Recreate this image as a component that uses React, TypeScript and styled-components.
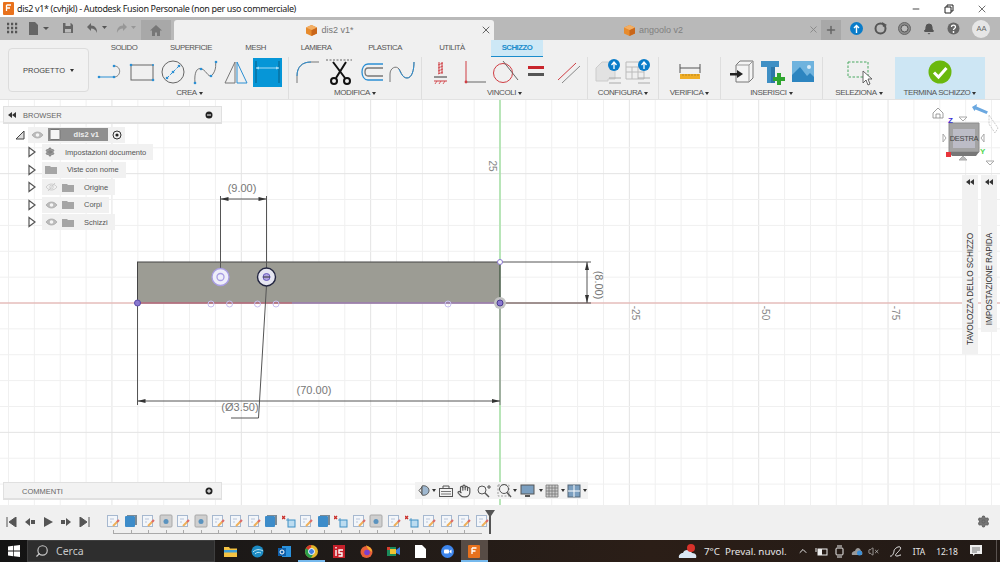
import React from 'react';
import styled, { createGlobalStyle } from 'styled-components';
import { Hand, Search, Settings, X, Plus, ChevronUp, VolumeX, Bell, Minus } from 'lucide-react';

const GlobalStyle = createGlobalStyle`
  html, body {
    margin: 0;
    padding: 0;
    overflow: hidden;
    background: #fff;
  }
  * {
    box-sizing: border-box;
  }
`;

const Page = styled.div`
  width: 1000px;
  height: 562px;
  display: flex;
  flex-direction: column;
  font-family: 'Liberation Sans', Arial, sans-serif;
  color: #555;
`;

/* ---- title bar ---- */
const TitleBar = styled.header`
  height: 17px;
  background: #fff;
  display: flex;
  align-items: center;
  padding: 0 2px 0 3px;
  font-family: 'Noto Sans', sans-serif;
  font-size: 9px;
  letter-spacing: -0.34px;
  color: #222;
`;

const TitleText = styled.span`
  margin-left: 3px;
  flex: 1;
  white-space: nowrap;
`;

const WindowBtn = styled.div`
  width: 33px;
  display: flex;
  justify-content: center;
  align-items: center;
  color: #222;
`;

/* ---- tab bar ---- */
const TabBar = styled.nav`
  height: 23px;
  background: #b9b9b9;
  display: flex;
  align-items: stretch;
  padding-top: 3px;
`;

const QuickTools = styled.div`
  width: 141px;
  display: flex;
  align-items: center;
  margin-top: -4px;
`;

const QuickBtn = styled.div<{ $w: number }>`
  width: ${p => p.$w}px;
  display: flex;
  justify-content: center;
  align-items: center;
`;

const HomeTab = styled.div`
  width: 30px;
  margin-right: 3px;
  background: #a8a8a8;
  display: flex;
  justify-content: center;
  align-items: center;
`;

const DocTab = styled.div<{ $active?: boolean }>`
  width: ${p => (p.$active ? 320 : 327)}px;
  background: ${p => (p.$active ? '#f0f0f0' : '#b9b9b9')};
  border-radius: 3px 3px 0 0;
  display: flex;
  align-items: center;
  justify-content: center;
  gap: 4px;
  position: relative;
  padding-right: 8px;
  font-size: 9px;
  color: ${p => (p.$active ? '#777' : '#808080')};
`;

const TabClose = styled.span`
  position: absolute;
  right: 2px;
  top: 4px;
  display: flex;
  color: #666;
`;

const PlusTab = styled.div`
  width: 20px;
  background: #a8a8a8;
  display: flex;
  justify-content: center;
  align-items: center;
  color: #666;
`;

const AccountTools = styled.div`
  flex: 1;
  display: flex;
  align-items: center;
  padding-left: 5px;
  gap: 4.3px;
  margin-top: -3px;
`;

const AccountBtn = styled.div`
  width: 20px;
  display: flex;
  justify-content: center;
`;

const Avatar = styled.div`
  width: 18px;
  height: 18px;
  margin-left: 5px;
  border-radius: 50%;
  background: #e6e6e6;
  color: #666;
  font-size: 7.5px;
  display: flex;
  align-items: center;
  justify-content: center;
`;

/* ---- ribbon ---- */
const Ribbon = styled.section`
  height: 60px;
  background: #f0f0f0;
  border-bottom: 1px solid #e2e2e2;
  display: flex;
  padding-left: 8px;
`;

const ProjectBox = styled.div`
  width: 81px;
  height: 44px;
  margin-top: 8px;
  border: 1px solid #dcdcdc;
  border-radius: 4px;
  background: #f2f2f2;
  color: #444;
  font-size: 7.5px;
  display: flex;
  align-items: center;
  justify-content: center;
  gap: 5px;
`;

const RibbonBody = styled.div`
  flex: 1;
  display: flex;
  flex-direction: column;
  padding-left: 2px;
`;

const RibbonTabs = styled.div`
  height: 17px;
  display: flex;
`;

const RibbonTab = styled.div<{ $w: number; $active?: boolean }>`
  width: ${p => p.$w}px;
  text-align: center;
  font-size: 7.8px;
  letter-spacing: -0.5px;
  line-height: 16px;
  height: 17px;
  color: ${p => (p.$active ? '#1a8ccc' : '#555')};
  font-weight: ${p => (p.$active ? 700 : 400)};
  background: ${p => (p.$active ? '#cde8f6' : 'transparent')};
  border-bottom: ${p => (p.$active ? '1px solid #1a8ccc' : 'none')};
`;

const ToolRow = styled.div`
  flex: 1;
  display: flex;
`;

const ToolGroup = styled.div<{ $w: number; $shade?: boolean; $sep?: boolean }>`
  width: ${p => p.$w}px;
  height: 42px;
  display: flex;
  flex-direction: column;
  align-items: center;
  background: ${p => (p.$shade ? '#cde6f4' : 'transparent')};
  border-right: ${p => (p.$sep ? '1px solid #dedede' : 'none')};
`;

const ToolIcons = styled.div<{ $gap: number }>`
  height: 30px;
  margin-bottom: 1px;
  display: flex;
  align-items: center;
  gap: ${p => p.$gap}px;
`;

const GroupLabel = styled.div`
  font-size: 8px;
  letter-spacing: -0.4px;
  color: #555;
  line-height: 10px;
  display: flex;
  align-items: center;
  gap: 2px;
  white-space: nowrap;
`;

const Caret = styled.i<{ $c?: string }>`
  display: inline-block;
  width: 0;
  height: 0;
  border-left: 2.5px solid transparent;
  border-right: 2.5px solid transparent;
  border-top: 3px solid ${p => p.$c || '#333'};
`;

/* ---- canvas ---- */
const Canvas = styled.main`
  flex: 1;
  position: relative;
  background: #fff;
  overflow: hidden;
`;

const Sketch = styled.svg`
  position: absolute;
  inset: 0;
  display: block;
`;

const Panel = styled.div<{ $top: number }>`
  position: absolute;
  left: 3px;
  top: ${p => p.$top}px;
  width: 219px;
`;

const PanelHead = styled.div`
  height: 18px;
  background: #f2f2f2;
  border: 1px solid #e0e0e0;
  border-bottom-width: 2px;
  display: flex;
  align-items: center;
  padding: 1px 8px 0 4px;
  font-size: 7.5px;
  color: #666;
`;

const PanelTitle = styled.span<{ $pad: number }>`
  flex: 1;
  padding-left: ${p => p.$pad}px;
`;

const TreeList = styled.div`
  display: flex;
  flex-direction: column;
  padding-top: 2px;
`;

const TreeRow = styled.div<{ $indent: number }>`
  height: 17.5px;
  display: flex;
  align-items: center;
  padding-left: ${p => p.$indent}px;
`;

const TreePill = styled.div<{ $ml: number }>`
  height: 16px;
  margin-left: ${p => p.$ml}px;
  display: flex;
  align-items: center;
  gap: 4px;
  background: #f1f1f1;
  padding: 0 3px;
  font-size: 7.5px;
  color: #555;
`;

const RootName = styled.div`
  width: 60px;
  height: 13px;
  background: #8f8f8f;
  color: #eee;
  font-size: 7.5px;
  font-weight: 700;
  display: flex;
  align-items: center;
  justify-content: space-between;
  padding: 0 9px 0 1px;
`;

const RowName = styled.span<{ $pl: number }>`
  padding-left: ${p => p.$pl}px;
  padding-right: 4px;
  white-space: nowrap;
`;

const NavBar = styled.div`
  position: absolute;
  left: 415px;
  top: 382px;
  width: 173px;
  height: 17px;
  background: #f2f2f2;
  display: flex;
  align-items: center;
  padding-left: 1px;
`;

const NavSlot = styled.div<{ $w: number }>`
  width: ${p => p.$w}px;
  display: flex;
  justify-content: center;
  align-items: center;
`;

const SidePanel = styled.div<{ $right: number; $h: number }>`
  position: absolute;
  top: 75px;
  right: ${p => p.$right}px;
  width: 16px;
  height: ${p => p.$h}px;
  background: #f1f1f1;
  display: flex;
  flex-direction: column;
  align-items: center;
  padding-top: 4px;
`;

const SideLabel = styled.div`
  writing-mode: vertical-rl;
  transform: rotate(180deg);
  font-size: 8.2px;
  letter-spacing: -0.1px;
  color: #333;
  white-space: nowrap;
  margin-top: 48px;
`;

const CubeBox = styled.svg`
  position: absolute;
  top: 0;
  right: 0;
`;

/* ---- timeline ---- */
const Timeline = styled.section`
  height: 35px;
  background: #f0f0f0;
  display: flex;
  align-items: flex-start;
  padding-left: 6px;
  position: relative;
`;

const PlayControls = styled.div`
  width: 100px;
  height: 33px;
  display: flex;
  align-items: center;
  gap: 6px;
`;

const TrackBox = styled.div`
  position: relative;
  padding-top: 9px;
`;

const TrackIcons = styled.div`
  display: flex;
  gap: 3.57px;
`;

const TrackRuler = styled.div`
  margin: 2px 0 0 7px;
  width: 369px;
  height: 4px;
  border-bottom: 1px solid #aaa;
  background: repeating-linear-gradient(
    to right,
    #aaa 0,
    #aaa 1px,
    transparent 1px,
    transparent 17.57px
  );
`;

const Marker = styled.svg`
  position: absolute;
  left: 379px;
  top: 5px;
`;

const TimelineGear = styled.div`
  position: absolute;
  right: 10px;
  top: 10px;
  display: flex;
  color: #666;
`;

/* ---- task bar ---- */
const Taskbar = styled.footer`
  height: 22px;
  background: linear-gradient(to right, #131313 0, #1e1a18 30%, #2b1e17 65%, #221a16 100%);
  display: flex;
  align-items: center;
  color: #e8e8e8;
  font-family: 'Noto Sans', sans-serif;
`;

const StartBtn = styled.div`
  width: 27px;
  display: flex;
  justify-content: center;
`;

const SearchBox = styled.div`
  width: 188px;
  height: 22px;
  background: #2e2e2e;
  border: 1px solid #3f3f3f;
  display: flex;
  align-items: center;
  gap: 7px;
  padding-left: 7px;
  font-size: 10.5px;
  color: #c8c8c8;
`;

const FlippedSearch = styled(Search)`
  transform: scaleX(-1);
`;

const AppIcons = styled.div`
  display: flex;
  margin-left: 2px;
  height: 22px;
`;

const AppIcon = styled.div<{ $on?: boolean; $line?: boolean }>`
  width: 27.1px;
  height: 22px;
  display: flex;
  align-items: center;
  justify-content: center;
  background: ${p => (p.$on ? '#574c46' : 'transparent')};
  box-shadow: ${p => (p.$line ? 'inset 0 -2px 0 #76b9ed' : 'none')};
`;

const Tray = styled.div`
  margin-left: auto;
  display: flex;
  align-items: center;
  font-size: 8.5px;
  color: #e8e8e8;
`;

const TrayItem = styled.div<{ $w: number }>`
  width: ${p => p.$w}px;
  display: flex;
  justify-content: center;
  align-items: center;
  white-space: nowrap;
`;

const Weather = styled.div`
  width: 96px;
  padding-left: 6px;
  font-size: 9.8px;
  white-space: nowrap;
`;

const DesktopEdge = styled.div`
  width: 1px;
  height: 22px;
  margin: 0 3px 0 10px;
  background: #5a5350;
`;

/* ---- ribbon icons, all 28x28 ---- */
const BLUE = '#2b8fd3';
const GREY = '#777';
const RED = '#cf3d43';

const Ico = ({ children, w = 28, h = 28 }: { children: React.ReactNode; w?: number; h?: number }) => (
  <svg width={w} height={h} viewBox={`0 0 ${w} ${h}`} fill="none">
    {children}
  </svg>
);

const Dot = ({ x, y, r = 1.3 }: { x: number; y: number; r?: number }) => <circle cx={x} cy={y} r={r} fill={BLUE} />;

const ribbonIcons: Record<string, React.ReactNode> = {
  slot: (
    <Ico>
      <path d="M2 19H17" stroke={BLUE} strokeWidth="1" />
      <path d="M17 19C24 19 25 8 17 8" stroke={GREY} strokeWidth="1" />
      <Dot x={2} y={19} /><Dot x={17} y={19} /><Dot x={17} y={8} />
    </Ico>
  ),
  rect: (
    <Ico>
      <rect x="3" y="7" width="22" height="15" stroke="#666" strokeWidth="1" />
      <Dot x={3} y={7} /><Dot x={25} y={22} /><Dot x={25} y={7} r={1} />
    </Ico>
  ),
  circle: (
    <Ico>
      <circle cx="14" cy="14" r="11" stroke="#666" strokeWidth="1" />
      <path d="M8 20L20 8" stroke={BLUE} strokeWidth="1" strokeDasharray="3 1.5" />
      <Dot x={8} y={20} /><Dot x={20} y={8} /><Dot x={14} y={14} />
    </Ico>
  ),
  spline: (
    <Ico>
      <path d="M4 25C3 14 6 9 11 11S18 22 22 16 24 6 25 4" stroke={GREY} strokeWidth="1" />
      <Dot x={4} y={25} /><Dot x={10} y={11} /><Dot x={20} y={18} /><Dot x={25} y={4} />
    </Ico>
  ),
  mirror: (
    <Ico>
      <path d="M13 4V25H3Z" stroke={GREY} strokeWidth="1" />
      <path d="M15 4V25H25Z" stroke={BLUE} strokeWidth="1" />
    </Ico>
  ),
  dim: (
    <svg width="29" height="29" viewBox="0 0 29 29">
      <rect width="29" height="29" fill="#0696d7" />
      <path d="M3 3V25M26 3V25" stroke="#075e86" strokeWidth="1" />
      <path d="M3 10H26" stroke="#a8dcf5" strokeWidth="1" />
      <path d="M3 10l3-1.5v3ZM26 10l-3-1.5v3Z" fill="#a8dcf5" />
    </svg>
  ),
  fillet: (
    <Ico>
      <path d="M3 25V18C3 9 8 4 17 4H25" stroke={GREY} strokeWidth="1" />
      <path d="M3 18C3 9 8 4 17 4" stroke={BLUE} strokeWidth="1" />
    </Ico>
  ),
  scissors: (
    <Ico>
      <path d="M1 2H27" stroke="#666" strokeWidth="1" strokeDasharray="2 1.5" />
      <path d="M8 4L20 20M21 4L11 20" stroke="#111" strokeWidth="2" />
      <circle cx="9" cy="23" r="3" stroke="#111" strokeWidth="2" />
      <circle cx="22" cy="23" r="3" stroke="#111" strokeWidth="2" />
    </Ico>
  ),
  offset: (
    <Ico>
      <path d="M26 6H11C3 6 3 22 11 22H26" stroke={BLUE} strokeWidth="1.3" />
      <path d="M26 10H11C7 10 7 18 11 18H26" stroke={GREY} strokeWidth="1.3" />
    </Ico>
  ),
  curve: (
    <Ico>
      <path d="M2 24V16C2 10 8 7 11 11S14 20 19 20 26 12 26 4" stroke={GREY} strokeWidth="1" />
      <path d="M11 11S14 20 19 20 26 12 26 4" stroke={BLUE} strokeWidth="1" />
    </Ico>
  ),
  fixHatch: (
    <Ico>
      <path d="M12 4V16M15 4V16" stroke={RED} strokeWidth="1" />
      <path d="M11 7l5-2M11 10l5-2M11 13l5-2M11 16l5-2" stroke={RED} strokeWidth="0.8" />
      <path d="M7 19H20" stroke="#555" strokeWidth="1.2" />
      <path d="M7 23H20" stroke={RED} strokeWidth="1" />
      <path d="M8 26l2-3M12 26l2-3M16 26l2-3" stroke={RED} strokeWidth="0.8" />
    </Ico>
  ),
  perp: (
    <Ico>
      <path d="M7 3V24" stroke={RED} strokeWidth="1" />
      <path d="M7 24H27" stroke="#666" strokeWidth="1" />
      <circle cx="7" cy="24" r="1.4" fill={RED} />
    </Ico>
  ),
  tangent: (
    <Ico>
      <circle cx="12" cy="15" r="9.5" stroke={RED} strokeWidth="1" />
      <path d="M12 3L27 22" stroke="#666" strokeWidth="1" />
    </Ico>
  ),
  equal: (
    <Ico>
      <rect x="6" y="8" width="16" height="3" fill="#c8252c" />
      <rect x="6" y="15" width="16" height="3" fill="#555" />
    </Ico>
  ),
  parallel: (
    <Ico>
      <path d="M4 22L22 5" stroke={RED} strokeWidth="1" />
      <path d="M8 25L26 8" stroke="#888" strokeWidth="1" />
    </Ico>
  ),
  config: (
    <Ico>
      <path d="M2 10L8 4H21V21H14V23H2Z" stroke="#ccc" fill="#e2e2e2" strokeWidth="1" />
      <path d="M15 20H27M15 25H27" stroke="#aaa" strokeWidth="1" />
      <circle cx="20" cy="7" r="6" fill="#0a7cc9" />
      <path d="M20 11V4M17.5 7L20 4l2.5 3" stroke="#fff" strokeWidth="1.3" />
    </Ico>
  ),
  table: (
    <Ico>
      <path d="M2 4H20V21H2ZM2 9H20M2 14H20M8 9V21M14 9V21" stroke="#bbb" strokeWidth="1" fill="#efefef" />
      <path d="M14 20H26M14 25H26" stroke="#aaa" strokeWidth="1" />
      <circle cx="20" cy="7" r="6" fill="#0a7cc9" />
      <path d="M20 11V4M17.5 7L20 4l2.5 3" stroke="#fff" strokeWidth="1.3" />
    </Ico>
  ),
  ruler: (
    <Ico>
      <path d="M4 6V15M24 6V15" stroke="#555" strokeWidth="1" />
      <path d="M4 10H24" stroke="#555" strokeWidth="1" />
      <rect x="4" y="16" width="20" height="5" fill="#f0ae27" />
      <path d="M7 16v2M10 16v2M13 16v2M16 16v2M19 16v2M22 16v2" stroke="#a8761a" strokeWidth="0.7" />
    </Ico>
  ),
  insertBox: (
    <Ico>
      <path d="M9 7L13 3H26V20L22 24H9Z" fill="#f4f4f4" stroke="#777" strokeWidth="1" />
      <path d="M9 7H22V24M22 7L26 3" stroke="#999" strokeWidth="1" />
      <path d="M3 15H10V12L16 16L10 20V17.5H3Z" fill="#222" />
    </Ico>
  ),
  bolt: (
    <Ico>
      <path d="M3 3H21V9H17V25H9V9H3Z" fill="#3f8fc4" />
      <path d="M13 9H17V25H13Z" fill="#2c76a8" />
      <path d="M19 15H23V19H27V23H23V27H19V23H15V19H19Z" fill="#2fa52f" />
    </Ico>
  ),
  picture: (
    <Ico>
      <rect x="3" y="3" width="22" height="21" fill="#6fb3de" />
      <path d="M3 24V17L11 9L18 18L21 15L25 19V24Z" fill="#2d85c0" />
      <circle cx="20" cy="9" r="2" fill="#d8ecf8" />
    </Ico>
  ),
  select: (
    <Ico>
      <rect x="3" y="4" width="20" height="15" stroke="#49a860" strokeWidth="1" strokeDasharray="2.5 1.5" />
      <path d="M18 13V25L21 22L23 27L25 26L23 21H27Z" fill="#fff" stroke="#555" strokeWidth="0.9" />
    </Ico>
  ),
  finish: (
    <Ico>
      <circle cx="14" cy="14" r="11.5" fill="#6ab80e" />
      <path d="M8 14.5L12.5 19L20.5 10" stroke="#fff" strokeWidth="3" />
    </Ico>
  ),
};

/* ---- timeline icons ---- */
const trackIcons: Record<string, React.ReactNode> = {
  sketch: (
    <Ico w={14} h={14}>
      <rect x="1.5" y="1.5" width="10" height="11" fill="#f3f6fa" stroke="#a6b8cf" />
      <path d="M4 5H8M4 8H6" stroke="#a9bad0" strokeWidth="0.8" />
      <path d="M7 12L12 7" stroke="#efb05a" strokeWidth="2" />
      <path d="M11 8L13 6" stroke="#dd6a6a" strokeWidth="2" />
    </Ico>
  ),
  box: (
    <Ico w={14} h={14}>
      <rect x="1" y="2" width="10" height="11" rx="1" fill="#3d8cc9" />
      <path d="M3 1H13V11H11V2H3Z" fill="#7a8a96" />
    </Ico>
  ),
  hole: (
    <Ico w={14} h={14}>
      <rect x="1" y="1" width="12" height="12" rx="1" fill="#cfcfcf" stroke="#a8a8a8" />
      <circle cx="7" cy="7.5" r="2.5" fill="#5a93bf" />
    </Ico>
  ),
  cross: (
    <Ico w={14} h={14}>
      <path d="M0 2l3 3M3 2L0 5" stroke="#c9302c" strokeWidth="1.5" />
      <rect x="6" y="6" width="7" height="7" fill="#bcdcf0" stroke="#3f8fc4" />
      <path d="M4 6H6M6 4V6" stroke="#3f8fc4" strokeWidth="0.8" />
    </Ico>
  ),
};

const tabs: [string, number][] = [
  ['SOLIDO', 66], ['SUPERFICIE', 68], ['MESH', 61], ['LAMIERA', 60],
  ['PLASTICA', 78], ['UTILITÀ', 56],
];

const groups = [
  { label: 'CREA', w: 198, gap: 3.4, icons: ['slot', 'rect', 'circle', 'spline', 'mirror', 'dim'], sep: true },
  { label: 'MODIFICA', w: 133, gap: 3.4, icons: ['fillet', 'scissors', 'offset', 'curve'], sep: true },
  { label: 'VINCOLI', w: 166, gap: 3.75, icons: ['fixHatch', 'perp', 'tangent', 'equal', 'parallel'], sep: true },
  { label: 'CONFIGURA', w: 71, gap: 2, icons: ['config', 'table'], sep: true },
  { label: 'VERIFICA', w: 62, gap: 0, icons: ['ruler'], sep: true },
  { label: 'INSERISCI', w: 102, gap: 3, icons: ['insertBox', 'bolt', 'picture'], sep: true },
  { label: 'SELEZIONA', w: 72, gap: 0, icons: ['select'], sep: false },
];

const track = ['sketch', 'box', 'sketch', 'hole', 'sketch', 'hole', 'sketch', 'sketch', 'sketch', 'box', 'cross',
  'sketch', 'box', 'cross', 'sketch', 'hole', 'sketch', 'cross', 'sketch', 'sketch', 'sketch', 'sketch'];

const Eye = ({ off }: { off?: boolean }) => (
  <Ico w={13} h={10}>
    <path d="M1 5C4 1 9 1 12 5C9 9 4 9 1 5Z" fill={off ? 'none' : '#bbb'} stroke={off ? '#c4c4c4' : '#aaa'} strokeWidth="0.8" />
    <circle cx="6.5" cy="5" r="1.8" fill={off ? 'none' : '#f4f4f4'} stroke={off ? '#c4c4c4' : 'none'} strokeWidth="0.7" />
    {off && <path d="M3 9L10 1" stroke="#c4c4c4" strokeWidth="0.8" />}
  </Ico>
);

const Folder = () => (
  <Ico w={12} h={9}>
    <path d="M0 1H5L6 2H12V9H0Z" fill="#a5a5a5" />
  </Ico>
);

const Twist = () => (
  <Ico w={8} h={12}>
    <path d="M1 1.5L7 6L1 10.5Z" fill="#fff" stroke="#555" strokeWidth="1.2" />
  </Ico>
);

const TinyArrows = () => (
  <Ico w={8} h={6}>
    <path d="M4 0V6L0 3ZM8 0V6L4 3Z" fill="#333" />
  </Ico>
);

const Knob = ({ plus }: { plus?: boolean }) => (
  <Ico w={8} h={8}>
    <circle cx="4" cy="4" r="3.5" fill="#222" />
    <path d={plus ? 'M2 4H6M4 2V6' : 'M2 4H6'} stroke="#fff" strokeWidth="1" />
  </Ico>
);

const Cube = () => (
  <Ico w={11} h={11}>
    <path d="M5.5 0L11 2.5V8.5L5.5 11L0 8.5V2.5Z" fill="#e78b2d" />
    <path d="M5.5 5L11 2.5V8.5L5.5 11Z" fill="#c9661a" />
    <path d="M5.5 5L0 2.5L5.5 0L11 2.5Z" fill="#f3ae63" />
  </Ico>
);

const grid = () => {
  const out: React.ReactNode[] = [];
  for (let i = -19; i <= 20; i++) {
    const x = 500 + i * 25.87;
    out.push(<line key={`v${i}`} x1={x} x2={x} y1={100} y2={505} stroke={i % 5 === 0 ? '#e3e3e3' : '#f0f0f0'} />);
  }
  for (let i = -8; i <= 8; i++) {
    const y = 303 + i * 25.87;
    out.push(<line key={`h${i}`} y1={y} y2={y} x1={0} x2={1000} stroke={i % 5 === 0 ? '#e3e3e3' : '#f0f0f0'} />);
  }
  return out;
};

const DIM = '#555';
const POINT = '#a99de4';

const SketchDrawing = () => (
  <Sketch width="1000" height="405" viewBox="0 100 1000 405" fill="none" fontFamily="'Liberation Sans', sans-serif">
    {grid()}
    <rect x="137.5" y="262" width="362.5" height="41" fill="#9c9c94" stroke="#444" strokeWidth="1" />
    <line x1="0" x2="1000" y1="303" y2="303" stroke="#e6a9a6" />
    <line x1="137" x2="292" y1="303" y2="303" stroke="#b45d78" />
    <line x1="292" x2="500" y1="303" y2="303" stroke="#8c78c8" />
    <line x1="500" x2="500" y1="100" y2="262" stroke="#9fe09f" strokeWidth="1.4" />
    <line x1="500" x2="500" y1="405" y2="505" stroke="#9fe09f" strokeWidth="1.4" />
    <line x1="500" x2="500" y1="262" y2="405" stroke="#4f6f4f" />

    {/* 9.00 */}
    <path d="M220.5 196V277M266.5 196V277M220.5 199H266.5" stroke={DIM} />
    <path d="M220.5 199l8-2v4ZM266.5 199l-8-2v4Z" fill="#333" />
    <text x="242" y="192" textAnchor="middle" fontSize="11" fill="#777">(9.00)</text>

    {/* 70.00 */}
    <path d="M137.5 303V405M137.5 401H500" stroke={DIM} />
    <path d="M137.5 401l8-2v4ZM500 401l-8-2v4Z" fill="#333" />
    <text x="314" y="394" textAnchor="middle" fontSize="11" fill="#777">(70.00)</text>

    {/* 8.00 */}
    <path d="M500 262H591M500 303H591M587 262V303" stroke={DIM} />
    <path d="M587 262l-2 8h4ZM587 303l-2-8h4Z" fill="#333" />
    <text transform="translate(595 285) rotate(90)" textAnchor="middle" fontSize="11" fill="#777">(8.00)</text>

    {/* diameter */}
    <path d="M267 277L258.5 418H231" stroke={DIM} />
    <text x="240" y="411" textAnchor="middle" fontSize="11" fill="#777">(Ø3.50)</text>

    {/* holes */}
    <circle cx="220.5" cy="277" r="8.5" fill="#eeeefa" stroke={POINT} strokeWidth="1.3" />
    <circle cx="220.5" cy="277" r="3.5" fill="none" stroke={POINT} strokeWidth="1.3" />
    <circle cx="266.5" cy="277" r="9" fill="#e6e6f2" stroke="#222540" strokeWidth="1.4" />
    <circle cx="266.5" cy="277" r="3.5" fill="#b0a4e0" stroke="#6a5cc0" />
    <line x1="263" x2="270" y1="277" y2="277" stroke="#333" />

    {[211, 229.5, 257.5, 276, 448].map(x => (
      <circle key={x} cx={x} cy="304" r="3" fill="none" stroke="#c7bff0" />
    ))}
    <circle cx="137.5" cy="303" r="3" fill="#8a78d0" stroke="#5a4aa8" />
    <circle cx="500" cy="303" r="6" fill="#c2c2c2" />
    <circle cx="500" cy="303" r="3" fill="#8a78d0" stroke="#4a3a90" />
    <circle cx="500" cy="262" r="2.5" fill="#fff" stroke="#8a78d0" />

    {/* axis values */}
    <text transform="translate(489 166) rotate(90)" fontSize="10" fill="#888" textAnchor="middle">25</text>
    {[['-25', 632], ['-50', 762], ['-75', 892]].map(([t, x]) => (
      <text key={t} transform={`translate(${x} 313) rotate(90)`} fontSize="10" fill="#888" textAnchor="middle">{t}</text>
    ))}
  </Sketch>
);

const ViewCube = () => (
  <CubeBox width="75" height="70" viewBox="0 0 75 70" fontFamily="'Liberation Sans', sans-serif">
    <path d="M8 13L13 8L18 13V18H8Z" fill="#fff" stroke="#888" strokeWidth="0.8" />
    <path d="M11 18V14H15V18" fill="none" stroke="#888" strokeWidth="0.8" />
    <path d="M47 7L52 4L51.5 6.5L63 11.5L61.5 14L50.5 9.5L49.5 11Z" fill="#6ba8e0" />
    <path d="M64 15L73 28L70 33L64 24Z" fill="none" stroke="#ccc" strokeDasharray="2 1" />
    <path d="M24 23H54V52H24Z" fill="#a3a3a3" stroke="#8c8c8c" />
    <path d="M24 52H54L51 56H27Z" fill="#777" />
    <rect x="28" y="29" width="22" height="19" fill="#bcbcc6" />
    <text x="39" y="41" textAnchor="middle" fontSize="7.5" fill="#444" letterSpacing="-0.3">DESTRA</text>
    <path d="M34 17H42L38 21Z" fill="none" stroke="#aaa" />
    <path d="M34 60H42L38 56Z" fill="#bbb" stroke="#aaa" />
    <path d="M18 34V42L21 38Z" fill="none" stroke="#aaa" />
    <path d="M59 34V42L56 38Z" fill="none" stroke="#aaa" />
    <path d="M61 61H69L65 65Z" fill="none" stroke="#aaa" />
    <text x="23" y="23" fontSize="8" fontWeight="700" fill="#3b2fd6">Z</text>
    <text x="55" y="54" fontSize="8" fontWeight="700" fill="#54d854">Y</text>
    <rect x="21" y="52" width="5" height="5" fill="#e8343a" />
  </CubeBox>
);

export default function App() {
  return (
    <Page>
      <GlobalStyle />
      <TitleBar>
        <Ico w={11} h={13}>
          <rect width="11" height="13" rx="1" fill="#e8711c" />
          <path d="M3.5 3H8M3.5 3V9M3.5 6H7" stroke="#fff" strokeWidth="1.3" />
        </Ico>
        <TitleText>dis2 v1* (cvhjkl) - Autodesk Fusion Personale (non per uso commerciale)</TitleText>
        <WindowBtn><Minus size={10} /></WindowBtn>
        <WindowBtn>
          <Ico w={10} h={10}>
            <path d="M1 3H7V9H1ZM3 3V1H9V7H7" stroke="#222" />
          </Ico>
        </WindowBtn>
        <WindowBtn><X size={12} strokeWidth={1.3} /></WindowBtn>
      </TitleBar>

      <TabBar>
        <QuickTools>
          <QuickBtn $w={24}>
            <Ico w={12} h={12}>
              <path d="M1 2H3.2M5 2H7.2M9 2H11.2M1 6H3.2M5 6H7.2M9 6H11.2M1 10H3.2M5 10H7.2M9 10H11.2" stroke="#555" strokeWidth="2.5" />
            </Ico>
          </QuickBtn>
          <QuickBtn $w={30}>
            <Ico w={22} h={13}>
              <path d="M1 0H7L10 3V13H1Z" fill="#666" />
              <path d="M15 5H21L18 8Z" fill="#555" />
            </Ico>
          </QuickBtn>
          <QuickBtn $w={28}>
            <Ico w={12} h={12}>
              <path d="M1 1H9L11 3V11H1Z" fill="#666" />
              <rect x="3.5" y="1" width="5" height="3" fill="#bbb" />
              <rect x="3" y="7" width="6" height="3.5" fill="#bbb" />
            </Ico>
          </QuickBtn>
          <QuickBtn $w={30}>
            <Ico w={22} h={12}>
              <path d="M5 1L1 5L5 9V6.5C8 6.5 10 8 11 11C11.5 7 9 3.5 5 3.5Z" fill="#666" />
              <path d="M16 4H21L18.5 7Z" fill="#555" />
            </Ico>
          </QuickBtn>
          <QuickBtn $w={29}>
            <Ico w={22} h={12}>
              <path d="M7 1L11 5L7 9V6.5C4 6.5 2 8 1 11C0.5 7 3 3.5 7 3.5Z" fill="#979797" />
              <path d="M15 4H20L17.5 7Z" fill="#979797" />
            </Ico>
          </QuickBtn>
        </QuickTools>
        <HomeTab>
          <Ico w={12} h={11}>
            <path d="M6 0L12 5.5H10V11H7V7.5H5V11H2V5.5H0Z" fill="#777" />
          </Ico>
        </HomeTab>
        <DocTab $active>
          <Cube />
          dis2 v1*
          <TabClose><X size={12} /></TabClose>
        </DocTab>
        <DocTab>
          <Cube />
          angoolo v2
          <TabClose><X size={11} color="#888" /></TabClose>
        </DocTab>
        <PlusTab><Plus size={12} strokeWidth={3} /></PlusTab>
        <AccountTools>
          <AccountBtn>
            <Ico w={13} h={13}>
              <circle cx="6.5" cy="6.5" r="6.5" fill="#0a7cc9" />
              <path d="M6.5 11V3.5M4 6L6.5 3.5L9 6" stroke="#fff" strokeWidth="1.4" />
            </Ico>
          </AccountBtn>
          <AccountBtn>
            <Ico w={13} h={13}>
              <circle cx="6.5" cy="6.5" r="5" stroke="#555" strokeWidth="2" />
              <path d="M8 0L13 3L9 5Z" fill="#555" />
            </Ico>
          </AccountBtn>
          <AccountBtn>
            <Ico w={13} h={13}>
              <circle cx="6.5" cy="6.5" r="6" fill="#8a8a8a" stroke="#666" />
              <circle cx="6.5" cy="6.5" r="3.5" fill="#bbb" stroke="#555" />
            </Ico>
          </AccountBtn>
          <AccountBtn><Bell size={12} fill="#555" color="#555" /></AccountBtn>
          <AccountBtn>
            <Ico w={13} h={13}>
              <circle cx="6.5" cy="6.5" r="6" fill="#666" />
              <path d="M4.5 5C4.5 2.5 8.5 2.5 8.5 5C8.5 6.5 6.5 6.5 6.5 8" stroke="#fff" strokeWidth="1.3" />
              <circle cx="6.5" cy="10" r="0.9" fill="#fff" />
            </Ico>
          </AccountBtn>
          <Avatar>AA</Avatar>
        </AccountTools>
      </TabBar>

      <Ribbon>
        <ProjectBox>PROGETTO <Caret /></ProjectBox>
        <RibbonBody>
          <RibbonTabs>
            {tabs.map(([t, w]) => <RibbonTab key={t} $w={w}>{t}</RibbonTab>)}
            <RibbonTab $w={11} />
            <RibbonTab $w={52} $active>SCHIZZO</RibbonTab>
          </RibbonTabs>
          <ToolRow>
            {groups.map(g => (
              <ToolGroup key={g.label} $w={g.w} $sep={g.sep}>
                <ToolIcons $gap={g.gap}>
                  {g.icons.map(i => <React.Fragment key={i}>{ribbonIcons[i]}</React.Fragment>)}
                </ToolIcons>
                <GroupLabel>{g.label} <Caret /></GroupLabel>
              </ToolGroup>
            ))}
            <ToolGroup $w={90} $shade>
              <ToolIcons $gap={0}>{ribbonIcons.finish}</ToolIcons>
              <GroupLabel>TERMINA SCHIZZO <Caret /></GroupLabel>
            </ToolGroup>
          </ToolRow>
        </RibbonBody>
      </Ribbon>

      <Canvas>
        <SketchDrawing />
        <ViewCube />

        <Panel $top={6}>
          <PanelHead>
            <TinyArrows />
            <PanelTitle $pad={7}>BROWSER</PanelTitle>
            <Knob />
          </PanelHead>
          <TreeList>
            <TreeRow $indent={12}>
              <Ico w={10} h={10}><path d="M1 9L9 1V9Z" stroke="#444" fill="#ddd" /></Ico>
              <TreePill $ml={3}>
                <Eye />
                <RootName>
                  <Ico w={12} h={11}><rect x="1" y="0.5" width="10" height="10" rx="1" fill="#f5f5f5" stroke="#777" /></Ico>
                  dis2 v1
                </RootName>
                <Ico w={10} h={10}><circle cx="5" cy="5" r="4" stroke="#333" /><circle cx="5" cy="5" r="1.6" fill="#222" /></Ico>
              </TreePill>
            </TreeRow>
            <TreeRow $indent={25}>
              <Twist />
              <TreePill $ml={6}>
                <Settings size={10} color="#777" fill="#999" />
                <RowName $pl={6}>Impostazioni documento</RowName>
              </TreePill>
            </TreeRow>
            <TreeRow $indent={25}>
              <Twist />
              <TreePill $ml={6}>
                <Folder />
                <RowName $pl={6}>Viste con nome</RowName>
              </TreePill>
            </TreeRow>
            {['Origine', 'Corpi', 'Schizzi'].map((n, i) => (
              <TreeRow key={n} $indent={25}>
                <Twist />
                <TreePill $ml={6}>
                  <Eye off={i === 0} />
                  <Folder />
                  <RowName $pl={6}>{n}</RowName>
                </TreePill>
              </TreeRow>
            ))}
          </TreeList>
        </Panel>

        <Panel $top={382}>
          <PanelHead>
            <PanelTitle $pad={14}>COMMENTI</PanelTitle>
            <Knob plus />
          </PanelHead>
        </Panel>

        <NavBar>
          <NavSlot $w={16}>
            <Ico w={15} h={13}>
              <path d="M2 6.5L5 3V10Z" stroke="#555" fill="none" />
              <path d="M5 2C8 1 12 3 12 6.5S8 12 5 11Z" fill="#9fb8d0" stroke="#555" />
            </Ico>
          </NavSlot>
          <NavSlot $w={4}><Caret /></NavSlot>
          <NavSlot $w={20}>
            <Ico w={16} h={13}>
              <rect x="1.5" y="4.5" width="13" height="8" stroke="#555" fill="#f2f2f2" />
              <path d="M3 7.5H13M3 10H13" stroke="#777" />
              <path d="M5 4V2H11V4" stroke="#555" />
            </Ico>
          </NavSlot>
          <NavSlot $w={16}><Hand size={14} color="#555" /></NavSlot>
          <NavSlot $w={23}>
            <Ico w={16} h={14}>
              <circle cx="6" cy="6" r="4" stroke="#555" />
              <path d="M9 9L13 13" stroke="#555" strokeWidth="1.5" />
              <path d="M11 3H15M13 1V5" stroke="#555" />
            </Ico>
          </NavSlot>
          <NavSlot $w={18}>
            <Ico w={15} h={15}>
              <rect x="1" y="2" width="11" height="11" stroke="#9c9c9c" strokeDasharray="2 1.5" />
              <circle cx="7" cy="6" r="4.5" stroke="#555" />
              <path d="M10 9.5L14 14" stroke="#555" strokeWidth="1.5" />
            </Ico>
          </NavSlot>
          <NavSlot $w={4}><Caret /></NavSlot>
          <NavSlot $w={22}>
            <Ico w={16} h={14}>
              <rect x="1" y="1" width="13" height="9" fill="#7b9fc0" stroke="#555" />
              <path d="M5 12H10" stroke="#555" strokeWidth="2" />
            </Ico>
          </NavSlot>
          <NavSlot $w={4}><Caret /></NavSlot>
          <NavSlot $w={18}>
            <Ico w={14} h={14}>
              <path d="M1 1H13V13H1ZM1 4H13M1 7H13M1 10H13M4 1V13M7 1V13M10 1V13" stroke="#777" strokeWidth="0.8" fill="#ccc" />
            </Ico>
          </NavSlot>
          <NavSlot $w={4}><Caret /></NavSlot>
          <NavSlot $w={18}>
            <Ico w={14} h={14}>
              <rect x="1" y="1" width="12" height="12" fill="#7b9fc0" stroke="#567" />
              <path d="M7 1V13M1 7H13" stroke="#fff" />
            </Ico>
          </NavSlot>
          <NavSlot $w={4}><Caret /></NavSlot>
        </NavBar>

        <SidePanel $right={22} $h={179}>
          <TinyArrows />
          <SideLabel>TAVOLOZZA DELLO SCHIZZO</SideLabel>
        </SidePanel>
        <SidePanel $right={3} $h={157}>
          <TinyArrows />
          <SideLabel>IMPOSTAZIONE RAPIDA</SideLabel>
        </SidePanel>
      </Canvas>

      <Timeline>
        <PlayControls>
          <Ico w={12} h={10}><path d="M1 0V10M10 0V10L3 5Z" stroke="#555" fill="#555" /></Ico>
          <Ico w={12} h={10}><path d="M6 1V9L1 5ZM7 3H11V7H7Z" fill="#555" /></Ico>
          <Ico w={12} h={12}><path d="M2 1L11 6L2 11Z" fill="#555" /></Ico>
          <Ico w={12} h={10}><path d="M6 1V9L11 5ZM1 3H5V7H1Z" fill="#555" /></Ico>
          <Ico w={12} h={10}><path d="M11 0V10M2 0V10L9 5Z" stroke="#555" fill="#555" /></Ico>
        </PlayControls>
        <TrackBox>
          <TrackIcons>
            {track.map((t, i) => <React.Fragment key={i}>{trackIcons[t]}</React.Fragment>)}
          </TrackIcons>
          <TrackRuler />
          <Marker width="10" height="24" viewBox="0 0 10 24">
            <path d="M0 0H10L6 6V24H4V6Z" fill="#555" />
          </Marker>
        </TrackBox>
        <TimelineGear><Settings size={13} fill="#777" strokeWidth={2} /></TimelineGear>
      </Timeline>

      <Taskbar>
        <StartBtn>
          <Ico w={12} h={12}>
            <path d="M0 1.5L5.3 0.8V5.6H0ZM6 0.7L12 0V5.6H6ZM0 6.4H5.3V11.2L0 10.5ZM6 6.4H12V12L6 11.3Z" fill="#fff" />
          </Ico>
        </StartBtn>
        <SearchBox>
          <FlippedSearch size={14} color="#c8c8c8" />
          Cerca
        </SearchBox>
        <AppIcons>
          <AppIcon>
            <Ico w={13} h={11}>
              <path d="M0 1H5L6 2.5H13V11H0Z" fill="#f4c343" />
              <rect x="0" y="4" width="13" height="2.5" fill="#3f9fd8" />
            </Ico>
          </AppIcon>
          <AppIcon>
            <Ico w={13} h={13}>
              <circle cx="6.5" cy="6.5" r="6" fill="#1c8bc4" />
              <path d="M2 7C5 4 9 4 12 6M4 9C6 7 8 7 10 8" stroke="#bfe6f5" />
            </Ico>
          </AppIcon>
          <AppIcon>
            <Ico w={13} h={13}>
              <rect x="4" y="1" width="9" height="11" fill="#2a92dd" />
              <rect x="0" y="3" width="8" height="8" fill="#0f5ea8" />
              <circle cx="4" cy="7" r="2" stroke="#fff" />
            </Ico>
          </AppIcon>
          <AppIcon $line>
            <Ico w={13} h={13}>
              <circle cx="6.5" cy="6.5" r="6.5" fill="#e3b62a" />
              <path d="M6.5 0A6.5 6.5 0 0 0 1 3.2L3.8 8.2Z" fill="#d8392b" />
              <path d="M1 3.2A6.5 6.5 0 0 0 6 13L8.8 8.2Z" fill="#2a9d49" />
              <circle cx="6.5" cy="6.5" r="3" fill="#3f7fe0" stroke="#fff" />
            </Ico>
          </AppIcon>
          <AppIcon><Ico w={12} h={13}><rect width="12" height="13" fill="#c5202a" /><path d="M3 2V3.5M3 5V11M10 5H6V8H9V11H5.5" stroke="#fff" strokeWidth="1.4" /></Ico></AppIcon>
          <AppIcon>
            <Ico w={13} h={13}>
              <circle cx="6.5" cy="7" r="6" fill="#e8603a" />
              <circle cx="7" cy="7.5" r="2.8" fill="#7a3fd0" />
              <path d="M6 0C9 2 12 3 12 7L8 4Z" fill="#f5b02f" />
            </Ico>
          </AppIcon>
          <AppIcon>
            <Ico w={13} h={12}>
              <rect x="0" y="2" width="9" height="9" fill="#1b8a5a" />
              <rect x="3" y="4" width="6" height="5" fill="#f1c232" />
              <path d="M9 5L13 2V10L9 8Z" fill="#3a7de0" />
              <rect x="0" y="2" width="3" height="3" fill="#d8402f" />
            </Ico>
          </AppIcon>
          <AppIcon><Ico w={11} h={13}><path d="M0 0H7L11 4V13H0Z" fill="#fff" /></Ico></AppIcon>
          <AppIcon>
            <Ico w={13} h={13}>
              <circle cx="6.5" cy="6.5" r="6.5" fill="#3d85ec" />
              <rect x="3" y="4.5" width="5" height="4" rx="1" fill="#fff" />
              <path d="M8.5 6L10.5 4.5V8.5L8.5 7Z" fill="#fff" />
            </Ico>
          </AppIcon>
          <AppIcon $on $line>
            <Ico w={12} h={13}>
              <rect width="12" height="13" rx="1" fill="#e8711c" />
              <path d="M4 3H8.5M4 3V9M4 6H7.5" stroke="#fff" strokeWidth="1.3" />
            </Ico>
          </AppIcon>
        </AppIcons>
        <Tray>
          <TrayItem $w={20}>
            <Ico w={20} h={16}>
              <path d="M1 15C0 12 3 10 5 10C6 6 12 6 14 10C18 10 19 13 18 15Z" fill="#dbe8f5" />
              <circle cx="13" cy="5" r="4" fill="#d9322a" />
            </Ico>
          </TrayItem>
          <Weather>7°C&nbsp; Preval. nuvol.</Weather>
          <TrayItem $w={18}><ChevronUp size={12} /></TrayItem>
          <TrayItem $w={18}>
            <Ico w={13} h={9}>
              <rect x="3" y="2" width="9" height="6" stroke="#eee" />
              <rect x="3" y="2" width="4" height="6" fill="#eee" />
              <path d="M1 1V5" stroke="#eee" />
            </Ico>
          </TrayItem>
          <TrayItem $w={18}>
            <Ico w={9} h={13}>
              <rect x="1" y="3" width="7" height="7" rx="1" stroke="#eee" />
              <path d="M2 1H7M2 12H7" stroke="#eee" />
            </Ico>
          </TrayItem>
          <TrayItem $w={18}>
            <Ico w={12} h={10}>
              <path d="M1 9C0 6 3 5 4 5C5 1 9 1 10 5C11 5 12 7 11 9Z" fill="#999" />
              <circle cx="8.5" cy="7" r="2.5" fill="#3a8fd8" />
            </Ico>
          </TrayItem>
          <TrayItem $w={14}><VolumeX size={11} strokeWidth={1.3} /></TrayItem>
          <TrayItem $w={30}>
            <Ico w={13} h={13}>
              <path d="M1 11C3 12 5 8 5 6S9 1 11 2 10 6 8 8 6 11 8 11 10 10 12 10" stroke="#eee" strokeWidth="1" />
            </Ico>
          </TrayItem>
          <TrayItem $w={18}>ITA</TrayItem>
          <TrayItem $w={38}>12:18</TrayItem>
          <TrayItem $w={20}>
            <Ico w={12} h={12}>
              <path d="M0 0H12V9H5L3 11V9H0Z" fill="#eee" />
              <path d="M2 3H10M2 5H10M2 7H7" stroke="#444" strokeWidth="0.7" />
            </Ico>
          </TrayItem>
          <DesktopEdge />
        </Tray>
      </Taskbar>
    </Page>
  );
}
